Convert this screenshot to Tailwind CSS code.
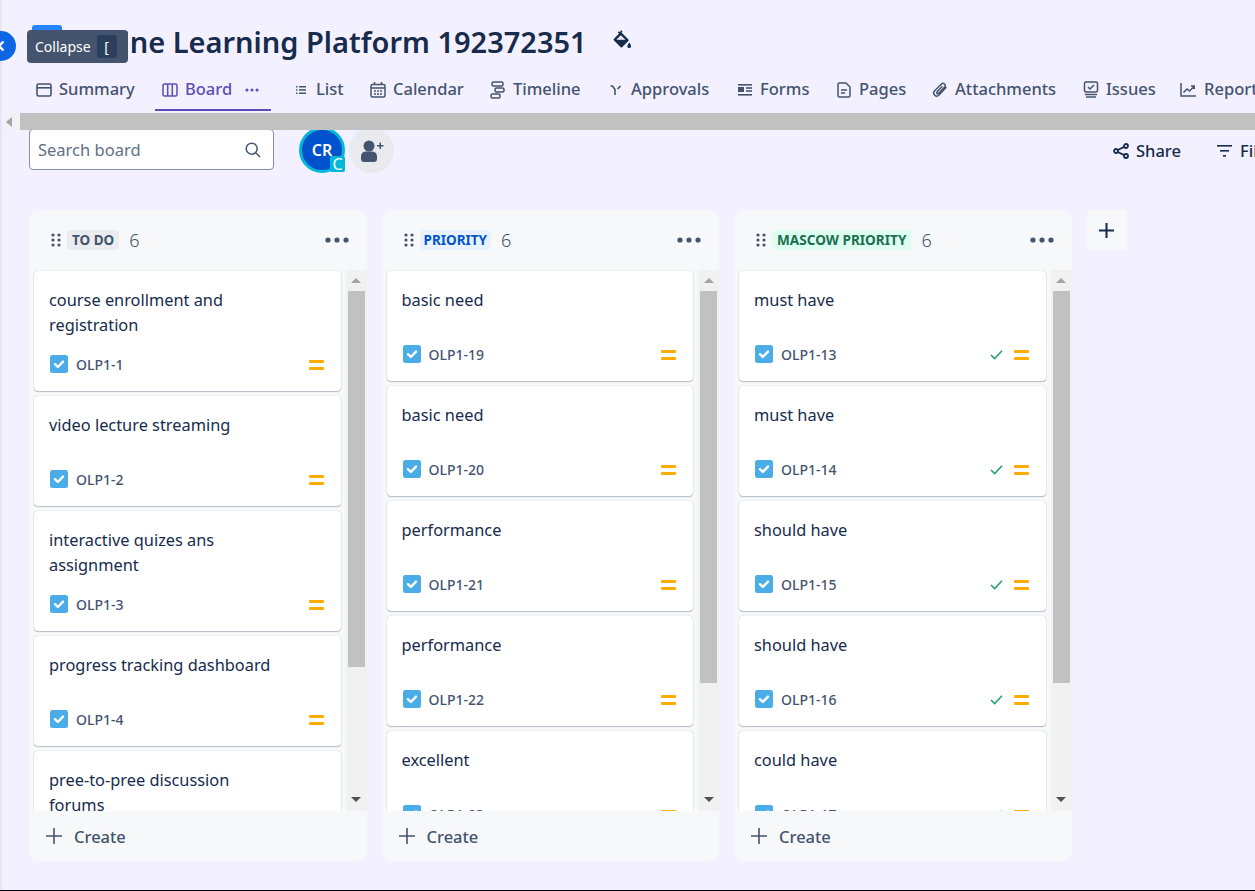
<!doctype html>
<html lang="en">
  <head>
    <meta charset="UTF-8" />
    <title>Online Learning Platform 192372351 - Board</title>
    <script src="https://cdn.jsdelivr.net/npm/@tailwindcss/browser@4"></script>
  </head>
  <body class="bg-[#f3f0ff] overflow-hidden font-['Noto_Sans',sans-serif]">
    <!-- shared icons -->
    <svg class="hidden">
      <symbol id="story" viewBox="0 0 18 18">
        <rect width="18" height="18" rx="2.5" fill="#4bade8" />
        <path d="M5 9.2l2.8 2.8L13 6.6" fill="none" stroke="#fff" stroke-width="2.4" stroke-linecap="round" stroke-linejoin="round" />
      </symbol>
      <symbol id="medium" viewBox="0 0 15 10">
        <rect y="0" width="15" height="3" rx="1" fill="#ffab00" />
        <rect y="7" width="15" height="3" rx="1" fill="#ffab00" />
      </symbol>
      <symbol id="done" viewBox="0 0 14 12">
        <path d="M1 6.5l4 4L13 2" fill="none" stroke="#22a06b" stroke-width="1.6" />
      </symbol>
      <symbol id="grip" viewBox="0 0 10 14">
        <g fill="#44546f"><circle cx="2" cy="2" r="1.6" /><circle cx="8" cy="2" r="1.6" /><circle cx="2" cy="7" r="1.6" /><circle cx="8" cy="7" r="1.6" /><circle cx="2" cy="12" r="1.6" /><circle cx="8" cy="12" r="1.6" /></g>
      </symbol>
      <symbol id="more" viewBox="0 0 24 6">
        <g fill="#44546f"><circle cx="3" cy="3" r="2.6" /><circle cx="12" cy="3" r="2.6" /><circle cx="21" cy="3" r="2.6" /></g>
      </symbol>
      <symbol id="plus" viewBox="0 0 16 16">
        <path d="M8 0v16M0 8h16" stroke="currentColor" stroke-width="1.6" fill="none" />
      </symbol>
    </svg>

    <div class="relative w-[1255px] h-[891px] overflow-hidden border-b border-black flex flex-col">
      <!-- sidebar edge -->
      <div class="absolute left-0 top-0 bottom-0 w-[2px] bg-[#e8e5f7]"></div>

      <!-- collapse button + tooltip -->
      <div class="absolute -left-[14px] top-[31px] w-[30px] h-[30px] rounded-full bg-[#0c66e4] flex items-center justify-end pr-[10px] z-20">
        <svg width="10" height="12" viewBox="0 0 10 12"><path d="M7.5 1.5L3 6l4.5 4.5" fill="none" stroke="#fff" stroke-width="2.4" /></svg>
      </div>
      <div class="absolute left-[27px] top-[30px] w-[101px] h-[33px] rounded bg-[#44546f] flex items-center pl-[8px] gap-[6px] text-white text-[14px] z-20">
        <span>Collapse</span>
        <span class="w-[20px] h-[23px] rounded-[3px] bg-[#2c3e5d] flex items-center justify-center text-[14px]">[</span>
      </div>

      <!-- title -->
      <div class="h-[68px] pl-[32px] pt-[25px] flex items-start shrink-0">
        <div class="w-[30px] h-[30px] rounded-[3px] bg-[#2684ff] shrink-0"></div>
        <h1 class="ml-[10px] -mt-[5px] text-[#172b4d] text-[29px] leading-[44px] font-semibold whitespace-nowrap">Online Learning Platform 192372351</h1>
        <svg class="ml-[25px] mt-[4px]" width="20" height="23" viewBox="0 0 20 23" fill="#172b4d"><path d="M9 1l1.5 1.5L9.5 3.6l6.9 6.9a1 1 0 0 1 0 1.4l-6.3 6.3a1 1 0 0 1-1.4 0l-6.9-6.9a1 1 0 0 1 0-1.4l5.3-5.3L5.6 3.6 7 2.2l1.1 1.1zM8.8 6.3L4.3 10.8h9.2z" /><path d="M17.3 13.5c1 1.6 1.8 2.6 1.8 3.7a1.9 1.9 0 0 1-3.8 0c0-1.1.9-2.1 2-3.7z" /></svg>
      </div>

      <!-- tabs -->
      <nav class="h-[45px] pl-[36px] flex items-start shrink-0 text-[#44546f] text-[16.5px] font-medium whitespace-nowrap">
        <a class="w-[126px] h-[43px] shrink-0 flex items-center gap-[7px]">
          <svg width="16" height="14" viewBox="0 0 16 14" fill="none" stroke="currentColor" stroke-width="1.6"><rect x="1" y="1" width="14" height="12" rx="1.5" /><path d="M1 4.8h14" /></svg>
          <span>Summary</span>
        </a>
        <a class="relative w-[132px] h-[43px] shrink-0 flex items-center gap-[7px] text-[#5e4db2]">
          <svg width="16" height="14" viewBox="0 0 16 14" fill="none" stroke="currentColor" stroke-width="1.5"><rect x="1" y="1" width="14" height="12" rx="1.5" /><path d="M5.7 1v12M10.3 1v12" /></svg>
          <span>Board</span>
          <svg class="ml-[6px]" width="14" height="4" viewBox="0 0 14 4" fill="currentColor"><circle cx="2" cy="2" r="1.5" /><circle cx="7" cy="2" r="1.5" /><circle cx="12" cy="2" r="1.5" /></svg>
          <span class="absolute -left-[7px] top-[41px] w-[116px] h-[2px] bg-[#5e4db2]"></span>
        </a>
        <a class="w-[76px] h-[43px] shrink-0 flex items-center gap-[10px] pl-[2px]">
          <svg width="10" height="8" viewBox="0 0 10 8" fill="currentColor"><rect y="0" width="1.5" height="1.5" /><rect y="3.2" width="1.5" height="1.5" /><rect y="6.5" width="1.5" height="1.5" /><rect x="3" y="0" width="7" height="1.5" /><rect x="3" y="3.2" width="7" height="1.5" /><rect x="3" y="6.5" width="7" height="1.5" /></svg>
          <span>List</span>
        </a>
        <a class="w-[120px] h-[43px] shrink-0 flex items-center gap-[7px]">
          <svg width="16" height="16" viewBox="0 0 16 16" fill="none" stroke="currentColor" stroke-width="1.5"><rect x="1" y="2.5" width="14" height="12.5" rx="1.5" /><path d="M1 6h14M4.5 0v3M11.5 0v3" /><path d="M4 9h2M7 9h2M10 9h2M4 12h2M7 12h2M10 12h2" stroke-width="1.6" /></svg>
          <span>Calendar</span>
        </a>
        <a class="w-[119px] h-[43px] shrink-0 flex items-center gap-[8px]">
          <svg width="15" height="18" viewBox="0 0 15 18" fill="none" stroke="currentColor" stroke-width="1.5"><rect x="2" y="1" width="11" height="4" rx="1.5" /><rect x="5" y="7" width="9" height="4" rx="1.5" /><rect x="1" y="13" width="9" height="4" rx="1.5" /></svg>
          <span>Timeline</span>
        </a>
        <a class="w-[129px] h-[43px] shrink-0 flex items-center gap-[10px] pl-[1px]">
          <svg width="11" height="10" viewBox="0 0 11 10" fill="none" stroke="currentColor" stroke-width="1.6"><path d="M.5 1h2l2.500 3.500V10M10.500 1L7.500 4" /></svg>
          <span>Approvals</span>
        </a>
        <a class="w-[99px] h-[43px] shrink-0 flex items-center gap-[8px]">
          <svg width="14" height="12" viewBox="0 0 14 12" fill="currentColor"><rect y="0" width="14" height="1.6" /><rect y="3" width="6" height="5" /><rect x="8" y="3.2" width="6" height="1.6" /><rect x="8" y="6.2" width="6" height="1.6" /><rect y="10" width="14" height="1.6" /></svg>
          <span>Forms</span>
        </a>
        <a class="w-[95px] h-[43px] shrink-0 flex items-center gap-[8px]">
          <svg width="14" height="16" viewBox="0 0 14 16" fill="none" stroke="currentColor" stroke-width="1.5"><path d="M2.5 1H9l4 4v8.500a1.500 1.500 0 0 1-1.500 1.500h-9A1.500 1.500 0 0 1 1 13.500v-11A1.500 1.500 0 0 1 2.500 1z" /><path d="M4 8h6M4 11h4" /></svg>
          <span>Pages</span>
        </a>
        <a class="w-[151px] h-[43px] shrink-0 flex items-center gap-[7px]">
          <svg width="16" height="16" viewBox="0 0 16 16" fill="none" stroke="currentColor" stroke-width="1.5" stroke-linecap="round"><path d="M14 5.5L7 13a3 3 0 0 1-4.500-4L9.500 2a2.200 2.200 0 0 1 3.200 3L6.500 11.400a1 1 0 0 1-1.600-1.300L10 4.800" /></svg>
          <span>Attachments</span>
        </a>
        <a class="w-[97px] h-[43px] shrink-0 flex items-center gap-[7px]">
          <svg width="16" height="17" viewBox="0 0 16 17" fill="none" stroke="currentColor" stroke-width="1.5"><rect x="1.5" y="1" width="13" height="10" rx="1.5" /><path d="M5 6l2 2 4-4M2 13.5h12M3 16h10" /></svg>
          <span>Issues</span>
        </a>
        <a class="h-[43px] shrink-0 flex items-center gap-[8px]">
          <svg width="16" height="14" viewBox="0 0 16 14" fill="none" stroke="currentColor" stroke-width="1.5"><path d="M1 0v13h15M3.500 9.500L7 6l2.500 2L14 3.500M11 3h3.200v3" /></svg>
          <span>Report</span>
        </a>
      </nav>

      <!-- page scrollbar -->
      <div class="h-[17px] flex shrink-0">
        <div class="ml-[5px] w-[15px] bg-[#f1f1f6] flex items-center pl-[1px]">
          <svg width="6" height="10" viewBox="0 0 6 10"><path d="M6 0v10L0 5z" fill="#a3a3a3" /></svg>
        </div>
        <div class="flex-1 bg-[#c1c1c1]"></div>
      </div>

      <!-- toolbar -->
      <div class="h-[80px] pl-[29px] flex items-start overflow-hidden shrink-0 whitespace-nowrap">
        <div class="-mt-[1px] w-[245px] h-[41px] bg-white border border-[#8590a2] rounded-[4px] flex items-center justify-between pl-[8px] pr-[12px] text-[#626f86] text-[16.5px] shrink-0">
          <span class="pt-[1px]">Search board</span>
          <svg width="16" height="16" viewBox="0 0 16 16" fill="none" stroke="#44546f" stroke-width="1.5"><circle cx="6.700" cy="6.700" r="5.500" /><path d="M10.800 10.800L15 15" /></svg>
        </div>
        <div class="relative ml-[25px] -mt-[3px] w-[46px] h-[46px] rounded-full bg-[#0052cc] border-[3px] border-[#00b8d9] flex items-center justify-center text-white text-[16px] font-semibold shrink-0">
          CR
          <span class="absolute -right-[3px] -bottom-[2px] w-[15px] h-[16px] rounded-[2px] bg-[#00b8d9] text-[16px] font-normal leading-[16px] text-center">C</span>
        </div>
        <div class="ml-[4px] -mt-[2px] w-[45px] h-[45px] rounded-full bg-[#e9eaee] flex items-center justify-center shrink-0">
          <svg width="24" height="24" viewBox="0 0 24 24" fill="#44546f"><circle cx="9" cy="7" r="5.500" /><path d="M1 17a5 5 0 0 1 5-4.500h6a5 5 0 0 1 5 4.500v3a3 3 0 0 1-3 3H4a3 3 0 0 1-3-3z" /><path d="M17 6h2.500V3.500h1.500V6h2.500v1.500H21V10h-1.500V7.500H17z" /></svg>
        </div>
        <div class="ml-[719px] mt-[9px] w-[104px] flex items-center gap-[7px] text-[#172b4d] text-[16.5px] font-medium shrink-0">
          <svg width="16" height="16" viewBox="0 0 16 16" fill="none" stroke="#172b4d" stroke-width="1.800"><circle cx="3" cy="8" r="2" /><circle cx="13" cy="3" r="2" /><circle cx="13" cy="13" r="2" /><path d="M4.800 7l6.400-3.100M4.800 9l6.400 3.100" /></svg>
          <span>Share</span>
        </div>
        <div class="mt-[9px] flex items-center gap-[8px] text-[#172b4d] text-[16.5px] font-medium shrink-0">
          <svg width="15" height="12" viewBox="0 0 15 12" fill="#172b4d"><rect width="15" height="1.600" /><rect x="3" y="5" width="9" height="1.600" /><rect x="6" y="10" width="3" height="1.600" /></svg>
          <span>Filter</span>
        </div>
      </div>

      <!-- board -->
      <main class="pl-[29px] flex items-start gap-[15px] text-[#172b4d]">
        <!-- TO DO -->
        <section class="w-[337.5px] h-[651px] rounded-[10px] bg-[#f7f8f9] flex flex-col overflow-hidden shrink-0">
          <header class="h-[60px] pl-[22px] pr-[18px] flex items-center shrink-0">
            <svg width="10" height="14"><use href="#grip" /></svg>
            <span class="ml-[6px] h-[20px] px-[5px] rounded-[3px] bg-[#ebecf0] text-[#44546f] text-[13.5px] font-bold leading-[20px]">TO DO</span>
            <span class="ml-[10px] text-[#44546f] text-[18px] font-light">6</span>
            <svg class="ml-auto" width="24" height="6"><use href="#more" /></svg>
          </header>
          <div class="flex-1 flex min-h-0">
            <div class="flex-1 min-w-0 pl-[5px] pr-[5px] pt-[1px] flex flex-col gap-[5px] overflow-hidden">
              <article class="shrink-0 rounded-[4px] bg-white pt-[17px] pb-[17px] px-[15px] shadow-[0_1px_1px_#091e4240,0_0_1px_#091e424f]">
                <p class="min-h-[40px] w-[230px] text-[16.35px] leading-[25px]">course enrollment and registration</p>
                <div class="mt-[16px] h-[20px] flex items-center text-[#44546f] text-[14px] font-medium">
                  <svg class="ml-[1px]" width="18" height="18"><use href="#story" /></svg><span class="ml-[8px]">OLP1-1</span>
                  <svg class="ml-auto mr-[2px] mt-[1px]" width="15" height="10"><use href="#medium" /></svg>
                </div>
              </article>
              <article class="shrink-0 rounded-[4px] bg-white pt-[17px] pb-[17px] px-[15px] shadow-[0_1px_1px_#091e4240,0_0_1px_#091e424f]">
                <p class="min-h-[40px] w-[230px] text-[16.35px] leading-[25px]">video lecture streaming</p>
                <div class="mt-[16px] h-[20px] flex items-center text-[#44546f] text-[14px] font-medium">
                  <svg class="ml-[1px]" width="18" height="18"><use href="#story" /></svg><span class="ml-[8px]">OLP1-2</span>
                  <svg class="ml-auto mr-[2px] mt-[1px]" width="15" height="10"><use href="#medium" /></svg>
                </div>
              </article>
              <article class="shrink-0 rounded-[4px] bg-white pt-[17px] pb-[17px] px-[15px] shadow-[0_1px_1px_#091e4240,0_0_1px_#091e424f]">
                <p class="min-h-[40px] w-[230px] text-[16.35px] leading-[25px]">interactive quizes ans assignment</p>
                <div class="mt-[16px] h-[20px] flex items-center text-[#44546f] text-[14px] font-medium">
                  <svg class="ml-[1px]" width="18" height="18"><use href="#story" /></svg><span class="ml-[8px]">OLP1-3</span>
                  <svg class="ml-auto mr-[2px] mt-[1px]" width="15" height="10"><use href="#medium" /></svg>
                </div>
              </article>
              <article class="shrink-0 rounded-[4px] bg-white pt-[17px] pb-[17px] px-[15px] shadow-[0_1px_1px_#091e4240,0_0_1px_#091e424f]">
                <p class="min-h-[40px] w-[230px] text-[16.35px] leading-[25px]">progress tracking dashboard</p>
                <div class="mt-[16px] h-[20px] flex items-center text-[#44546f] text-[14px] font-medium">
                  <svg class="ml-[1px]" width="18" height="18"><use href="#story" /></svg><span class="ml-[8px]">OLP1-4</span>
                  <svg class="ml-auto mr-[2px] mt-[1px]" width="15" height="10"><use href="#medium" /></svg>
                </div>
              </article>
              <article class="shrink-0 rounded-[4px] bg-white pt-[17px] pb-[17px] px-[15px] shadow-[0_1px_1px_#091e4240,0_0_1px_#091e424f]">
                <p class="min-h-[40px] w-[200px] text-[16.35px] leading-[25px]">pree-to-pree discussion forums</p>
              </article>
            </div>
            <div class="w-[21px] bg-[#f1f1f1] flex flex-col items-center shrink-0">
              <svg class="mt-[8px] mb-[8px]" width="10" height="5" viewBox="0 0 10 5"><path d="M5 0l5 5H0z" fill="#a3a3a3" /></svg>
              <div class="w-[17px] h-[376px] bg-[#c1c1c1]"></div>
              <svg class="mt-auto mb-[9px]" width="10" height="5" viewBox="0 0 10 5"><path d="M0 0h10L5 5z" fill="#505050" /></svg>
            </div>
          </div>
          <footer class="h-[50px] pl-[17px] flex items-center gap-[12px] text-[#44546f] text-[16.5px] font-medium shrink-0">
            <svg width="16" height="16"><use href="#plus" /></svg><span class="pt-[2px]">Create</span>
          </footer>
        </section>

        <!-- PRIORITY -->
        <section class="w-[337.5px] h-[651px] rounded-[10px] bg-[#f7f8f9] flex flex-col overflow-hidden shrink-0">
          <header class="h-[60px] pl-[22px] pr-[18px] flex items-center shrink-0">
            <svg width="10" height="14"><use href="#grip" /></svg>
            <span class="ml-[6px] h-[20px] px-[4px] rounded-[3px] bg-[#e9f2ff] text-[#0055cc] text-[13.5px] font-bold leading-[20px]">PRIORITY</span>
            <span class="ml-[10px] text-[#44546f] text-[18px] font-light">6</span>
            <svg class="ml-auto" width="24" height="6"><use href="#more" /></svg>
          </header>
          <div class="flex-1 flex min-h-0">
            <div class="flex-1 min-w-0 pl-[5px] pr-[5px] pt-[1px] flex flex-col gap-[5px] overflow-hidden">
              <article class="shrink-0 rounded-[4px] bg-white pt-[17px] pb-[17px] px-[15px] shadow-[0_1px_1px_#091e4240,0_0_1px_#091e424f]">
                <p class="min-h-[40px] text-[16.35px] leading-[25px]">basic need</p>
                <div class="mt-[16px] h-[20px] flex items-center text-[#44546f] text-[14px] font-medium">
                  <svg class="ml-[1px]" width="18" height="18"><use href="#story" /></svg><span class="ml-[8px]">OLP1-19</span>
                  <svg class="ml-auto mr-[2px] mt-[1px]" width="15" height="10"><use href="#medium" /></svg>
                </div>
              </article>
              <article class="shrink-0 rounded-[4px] bg-white pt-[17px] pb-[17px] px-[15px] shadow-[0_1px_1px_#091e4240,0_0_1px_#091e424f]">
                <p class="min-h-[40px] text-[16.35px] leading-[25px]">basic need</p>
                <div class="mt-[16px] h-[20px] flex items-center text-[#44546f] text-[14px] font-medium">
                  <svg class="ml-[1px]" width="18" height="18"><use href="#story" /></svg><span class="ml-[8px]">OLP1-20</span>
                  <svg class="ml-auto mr-[2px] mt-[1px]" width="15" height="10"><use href="#medium" /></svg>
                </div>
              </article>
              <article class="shrink-0 rounded-[4px] bg-white pt-[17px] pb-[17px] px-[15px] shadow-[0_1px_1px_#091e4240,0_0_1px_#091e424f]">
                <p class="min-h-[40px] text-[16.35px] leading-[25px]">performance</p>
                <div class="mt-[16px] h-[20px] flex items-center text-[#44546f] text-[14px] font-medium">
                  <svg class="ml-[1px]" width="18" height="18"><use href="#story" /></svg><span class="ml-[8px]">OLP1-21</span>
                  <svg class="ml-auto mr-[2px] mt-[1px]" width="15" height="10"><use href="#medium" /></svg>
                </div>
              </article>
              <article class="shrink-0 rounded-[4px] bg-white pt-[17px] pb-[17px] px-[15px] shadow-[0_1px_1px_#091e4240,0_0_1px_#091e424f]">
                <p class="min-h-[40px] text-[16.35px] leading-[25px]">performance</p>
                <div class="mt-[16px] h-[20px] flex items-center text-[#44546f] text-[14px] font-medium">
                  <svg class="ml-[1px]" width="18" height="18"><use href="#story" /></svg><span class="ml-[8px]">OLP1-22</span>
                  <svg class="ml-auto mr-[2px] mt-[1px]" width="15" height="10"><use href="#medium" /></svg>
                </div>
              </article>
              <article class="shrink-0 rounded-[4px] bg-white pt-[17px] pb-[17px] px-[15px] shadow-[0_1px_1px_#091e4240,0_0_1px_#091e424f]">
                <p class="min-h-[40px] text-[16.35px] leading-[25px]">excellent</p>
                <div class="mt-[16px] h-[20px] flex items-center text-[#44546f] text-[14px] font-medium">
                  <svg class="ml-[1px]" width="18" height="18"><use href="#story" /></svg><span class="ml-[8px]">OLP1-23</span>
                  <svg class="ml-auto mr-[2px] mt-[1px]" width="15" height="10"><use href="#medium" /></svg>
                </div>
              </article>
            </div>
            <div class="w-[21px] bg-[#f1f1f1] flex flex-col items-center shrink-0">
              <svg class="mt-[8px] mb-[8px]" width="10" height="5" viewBox="0 0 10 5"><path d="M5 0l5 5H0z" fill="#a3a3a3" /></svg>
              <div class="w-[17px] h-[392px] bg-[#c1c1c1]"></div>
              <svg class="mt-auto mb-[9px]" width="10" height="5" viewBox="0 0 10 5"><path d="M0 0h10L5 5z" fill="#505050" /></svg>
            </div>
          </div>
          <footer class="h-[50px] pl-[17px] flex items-center gap-[12px] text-[#44546f] text-[16.5px] font-medium shrink-0">
            <svg width="16" height="16"><use href="#plus" /></svg><span class="pt-[2px]">Create</span>
          </footer>
        </section>

        <!-- MASCOW PRIORITY -->
        <section class="w-[337.5px] h-[651px] rounded-[10px] bg-[#f7f8f9] flex flex-col overflow-hidden shrink-0">
          <header class="h-[60px] pl-[22px] pr-[18px] flex items-center shrink-0">
            <svg width="10" height="14"><use href="#grip" /></svg>
            <span class="ml-[6px] h-[20px] px-[5px] rounded-[3px] bg-[#dcfff1] text-[#216e4e] text-[13.6px] font-bold leading-[20px]">MASCOW PRIORITY</span>
            <span class="ml-[10px] text-[#44546f] text-[18px] font-light">6</span>
            <svg class="ml-auto" width="24" height="6"><use href="#more" /></svg>
          </header>
          <div class="flex-1 flex min-h-0">
            <div class="flex-1 min-w-0 pl-[5px] pr-[5px] pt-[1px] flex flex-col gap-[5px] overflow-hidden">
              <article class="shrink-0 rounded-[4px] bg-white pt-[17px] pb-[17px] px-[15px] shadow-[0_1px_1px_#091e4240,0_0_1px_#091e424f]">
                <p class="min-h-[40px] text-[16.35px] leading-[25px]">must have</p>
                <div class="mt-[16px] h-[20px] flex items-center text-[#44546f] text-[14px] font-medium">
                  <svg class="ml-[1px]" width="18" height="18"><use href="#story" /></svg><span class="ml-[8px]">OLP1-13</span>
                  <svg class="ml-auto" width="13" height="11"><use href="#done" /></svg>
                  <svg class="ml-[11px] mr-[2px] mt-[1px]" width="15" height="10"><use href="#medium" /></svg>
                </div>
              </article>
              <article class="shrink-0 rounded-[4px] bg-white pt-[17px] pb-[17px] px-[15px] shadow-[0_1px_1px_#091e4240,0_0_1px_#091e424f]">
                <p class="min-h-[40px] text-[16.35px] leading-[25px]">must have</p>
                <div class="mt-[16px] h-[20px] flex items-center text-[#44546f] text-[14px] font-medium">
                  <svg class="ml-[1px]" width="18" height="18"><use href="#story" /></svg><span class="ml-[8px]">OLP1-14</span>
                  <svg class="ml-auto" width="13" height="11"><use href="#done" /></svg>
                  <svg class="ml-[11px] mr-[2px] mt-[1px]" width="15" height="10"><use href="#medium" /></svg>
                </div>
              </article>
              <article class="shrink-0 rounded-[4px] bg-white pt-[17px] pb-[17px] px-[15px] shadow-[0_1px_1px_#091e4240,0_0_1px_#091e424f]">
                <p class="min-h-[40px] text-[16.35px] leading-[25px]">should have</p>
                <div class="mt-[16px] h-[20px] flex items-center text-[#44546f] text-[14px] font-medium">
                  <svg class="ml-[1px]" width="18" height="18"><use href="#story" /></svg><span class="ml-[8px]">OLP1-15</span>
                  <svg class="ml-auto" width="13" height="11"><use href="#done" /></svg>
                  <svg class="ml-[11px] mr-[2px] mt-[1px]" width="15" height="10"><use href="#medium" /></svg>
                </div>
              </article>
              <article class="shrink-0 rounded-[4px] bg-white pt-[17px] pb-[17px] px-[15px] shadow-[0_1px_1px_#091e4240,0_0_1px_#091e424f]">
                <p class="min-h-[40px] text-[16.35px] leading-[25px]">should have</p>
                <div class="mt-[16px] h-[20px] flex items-center text-[#44546f] text-[14px] font-medium">
                  <svg class="ml-[1px]" width="18" height="18"><use href="#story" /></svg><span class="ml-[8px]">OLP1-16</span>
                  <svg class="ml-auto" width="13" height="11"><use href="#done" /></svg>
                  <svg class="ml-[11px] mr-[2px] mt-[1px]" width="15" height="10"><use href="#medium" /></svg>
                </div>
              </article>
              <article class="shrink-0 rounded-[4px] bg-white pt-[17px] pb-[17px] px-[15px] shadow-[0_1px_1px_#091e4240,0_0_1px_#091e424f]">
                <p class="min-h-[40px] text-[16.35px] leading-[25px]">could have</p>
                <div class="mt-[16px] h-[20px] flex items-center text-[#44546f] text-[14px] font-medium">
                  <svg class="ml-[1px]" width="18" height="18"><use href="#story" /></svg><span class="ml-[8px]">OLP1-17</span>
                  <svg class="ml-auto" width="13" height="11"><use href="#done" /></svg>
                  <svg class="ml-[11px] mr-[2px] mt-[1px]" width="15" height="10"><use href="#medium" /></svg>
                </div>
              </article>
            </div>
            <div class="w-[21px] bg-[#f1f1f1] flex flex-col items-center shrink-0">
              <svg class="mt-[8px] mb-[8px]" width="10" height="5" viewBox="0 0 10 5"><path d="M5 0l5 5H0z" fill="#a3a3a3" /></svg>
              <div class="w-[17px] h-[392px] bg-[#c1c1c1]"></div>
              <svg class="mt-auto mb-[9px]" width="10" height="5" viewBox="0 0 10 5"><path d="M0 0h10L5 5z" fill="#505050" /></svg>
            </div>
          </div>
          <footer class="h-[50px] pl-[17px] flex items-center gap-[12px] text-[#44546f] text-[16.5px] font-medium shrink-0">
            <svg width="16" height="16"><use href="#plus" /></svg><span class="pt-[2px]">Create</span>
          </footer>
        </section>

        <button class="w-[40px] h-[40px] rounded-[4px] bg-[#f7f8f9] flex items-center justify-center text-[#172b4d] shrink-0">
          <svg width="15" height="15" viewBox="0 0 16 16"><path d="M8 0v16M0 8h16" stroke="currentColor" stroke-width="2.2" fill="none" /></svg>
        </button>
      </main>
    </div>
  </body>
</html>
